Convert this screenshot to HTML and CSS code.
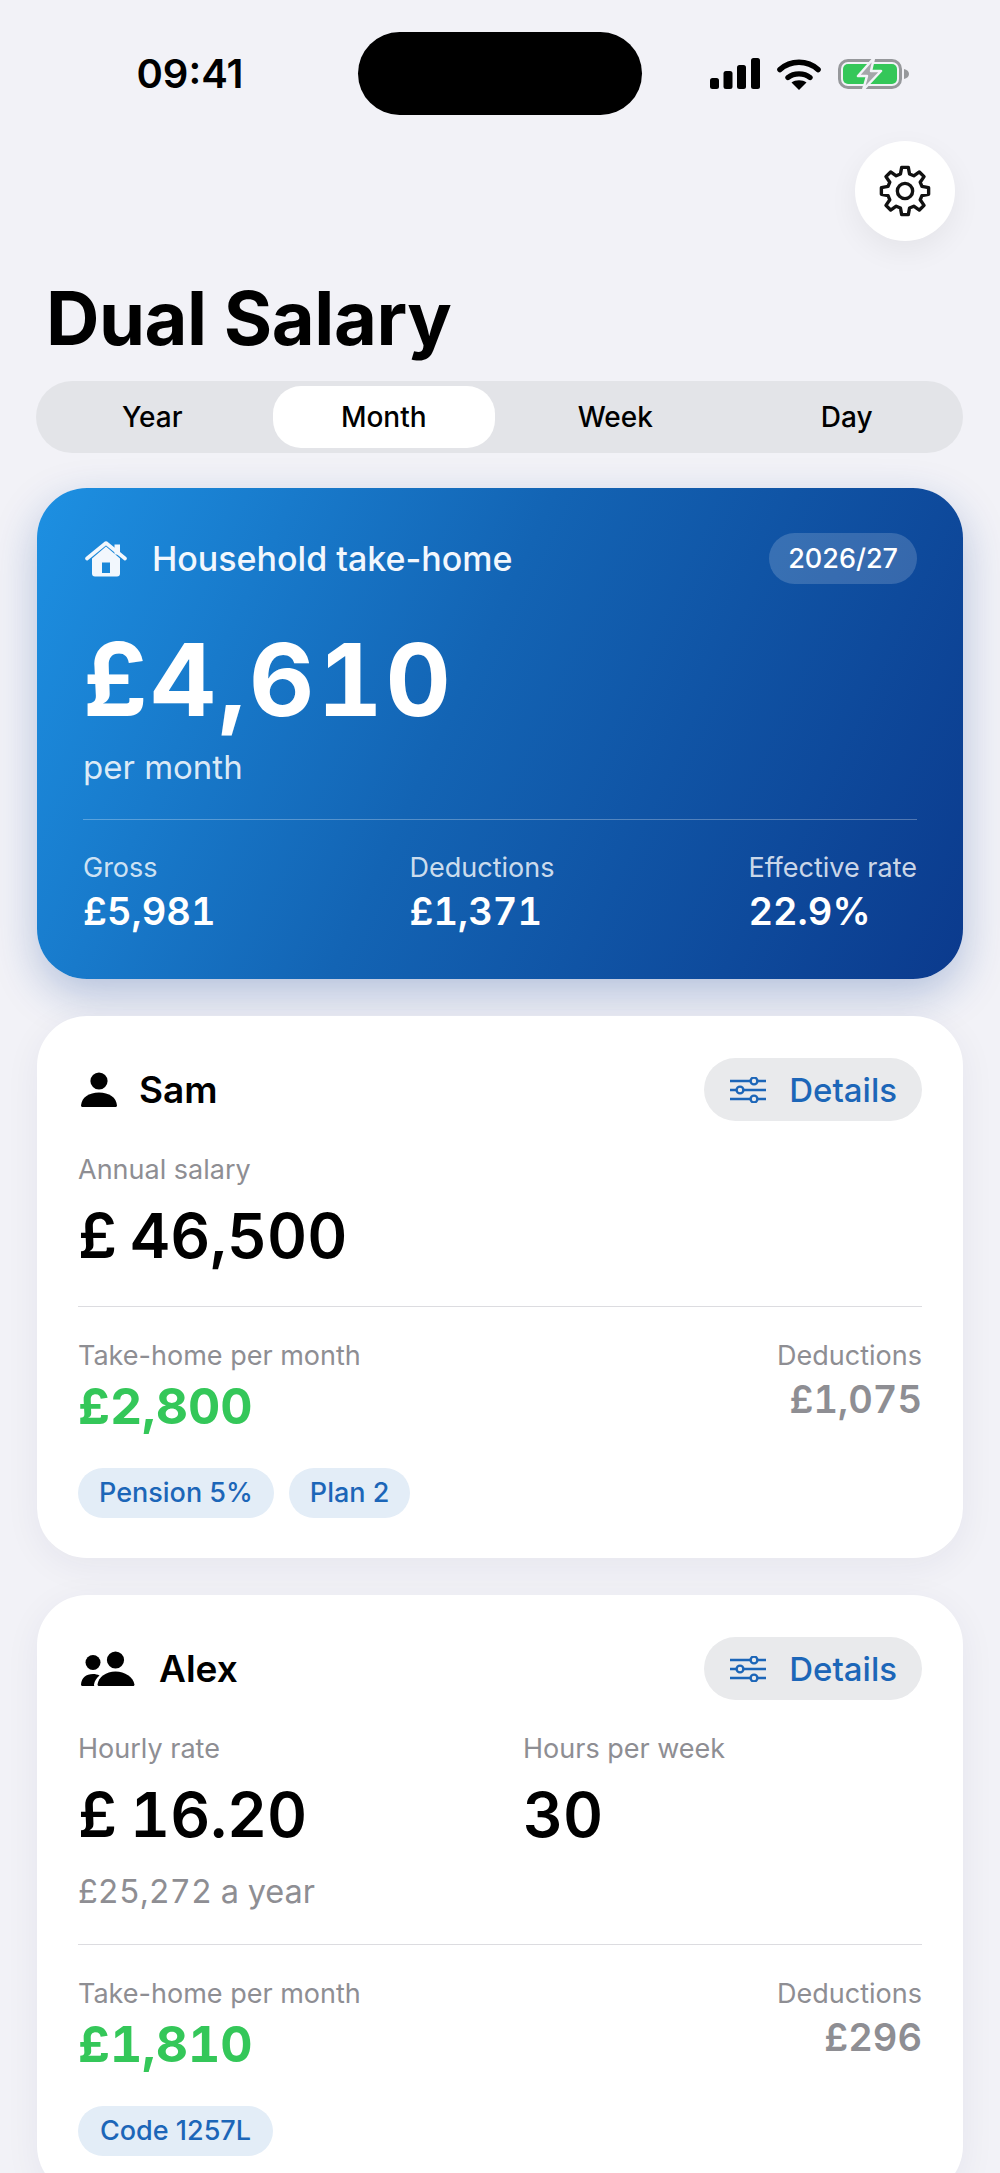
FILE: index.html
```html
<!DOCTYPE html>
<html lang="en">
<head>
    <meta charset="UTF-8">
    <meta name="viewport" content="width=device-width, initial-scale=1.0">
    <title>Dual Salary</title>
    <link rel="stylesheet" href="styles.css">
</head>
<body>
    <svg class="sprites" width="0" height="0" aria-hidden="true">
        <symbol id="icon-sliders" viewBox="0 0 36 26">
            <path d="M0 4h20M28 4h8M0 13h6M14 13h22M0 22h20M28 22h8" fill="none" stroke="currentColor" stroke-width="2.6" stroke-linecap="round"/>
            <circle cx="24" cy="4" r="3.4" fill="none" stroke="currentColor" stroke-width="2.4"/>
            <circle cx="10" cy="13" r="3.4" fill="none" stroke="currentColor" stroke-width="2.4"/>
            <circle cx="24" cy="22" r="3.4" fill="none" stroke="currentColor" stroke-width="2.4"/>
        </symbol>
    </svg>

    <div class="screen">
        <header class="status-bar">
            <span class="time">09:41</span>
            <span class="island"></span>
            <div class="status-icons">
                <svg class="signal" width="50" height="31" viewBox="0 0 50 31">
                    <rect x="0" y="20" width="9" height="11" rx="2.5"/>
                    <rect x="13.5" y="13" width="9" height="18" rx="2.5"/>
                    <rect x="27" y="7" width="9" height="24" rx="2.5"/>
                    <rect x="41" y="0" width="9" height="31" rx="2.5"/>
                </svg>
                <svg class="wifi" width="44" height="32" viewBox="0 0 44 32">
                    <path d="M3 11.5C13.5 1.8 30.5 1.8 41 11.5" fill="none" stroke="#000" stroke-width="5.6" stroke-linecap="round"/>
                    <path d="M11 19.5C16.8 14.6 27.2 14.6 33 19.5" fill="none" stroke="#000" stroke-width="5.4" stroke-linecap="round"/>
                    <path d="M22 32L14.5 24.5C18.5 21.4 25.5 21.4 29.5 24.5Z"/>
                </svg>
                <svg class="battery" width="71" height="32" viewBox="0 0 71 32">
                    <rect x="1.5" y="2.5" width="61" height="27" rx="8.5" fill="none" stroke="#96989b" stroke-width="3"/>
                    <rect x="5" y="6" width="54" height="20" rx="5" fill="#34c759"/>
                    <path d="M66 11c3 .6 5 2.4 5 5s-2 4.4-5 5z" fill="#96989b"/>
                    <path d="M36 0L20 18h9l-4 14 18-19h-10z" fill="#a4a6a9" stroke="#f2f2f7" stroke-width="2.5" stroke-linejoin="round"/>
                </svg>
            </div>
        </header>

        <div class="toolbar">
            <button class="settings-btn" aria-label="Settings">
                <svg width="54" height="54" viewBox="-12 -12 24 24">
                    <polygon points="-2.02,-7.53 -1.475,-10.5 1.475,-10.5 2.02,-7.53 3.9,-6.75 6.38,-8.47 8.47,-6.38 6.75,-3.9 7.53,-2.02 10.5,-1.475 10.5,1.475 7.53,2.02 6.75,3.9 8.47,6.38 6.38,8.47 3.9,6.75 2.02,7.53 1.475,10.5 -1.475,10.5 -2.02,7.53 -3.9,6.75 -6.38,8.47 -8.47,6.38 -6.75,3.9 -7.53,2.02 -10.5,1.475 -10.5,-1.475 -7.53,-2.02 -6.75,-3.9 -8.47,-6.38 -6.38,-8.47 -3.9,-6.75" fill="none" stroke="#111" stroke-width="1.5" stroke-linejoin="round"/>
                    <circle r="3.4" fill="none" stroke="#111" stroke-width="1.5"/>
                </svg>
            </button>
        </div>

        <h1 class="page-title">Dual Salary</h1>

        <nav class="period-tabs">
            <span class="tab">Year</span>
            <span class="tab active">Month</span>
            <span class="tab">Week</span>
            <span class="tab">Day</span>
        </nav>

        <section class="hero-card">
            <div class="hero-head">
                <div class="hero-title">
                    <svg width="42" height="36" viewBox="0 0 42 36">
                        <path d="M7 17.5L21 5.5L35 17.5V32.5A3 3 0 0 1 32 35.5H10A3 3 0 0 1 7 32.5ZM17 21.5V32H25V21.5Z" fill="#f2f7fd" fill-rule="evenodd"/>
                        <path d="M2 17.5L21 2L40 17.5" fill="none" stroke="#f2f7fd" stroke-width="3.6" stroke-linecap="round" stroke-linejoin="round"/>
                        <rect x="29.5" y="3.5" width="5.5" height="10" fill="#f2f7fd"/>
                    </svg>
                    <span>Household take-home</span>
                </div>
                <span class="tax-year">2026/27</span>
            </div>
            <div class="hero-amount">£4,610</div>
            <div class="hero-period">per month</div>
            <div class="hero-stats">
                <div>
                    <div class="stat-label">Gross</div>
                    <div class="stat-value">£5,981</div>
                </div>
                <div>
                    <div class="stat-label">Deductions</div>
                    <div class="stat-value">£1,371</div>
                </div>
                <div>
                    <div class="stat-label">Effective rate</div>
                    <div class="stat-value">22.9%</div>
                </div>
            </div>
        </section>

        <section class="person-card">
            <div class="person-head">
                <div class="person-name">
                    <svg width="36" height="36" viewBox="0 0 36 36">
                        <circle cx="18" cy="9" r="8.6"/>
                        <path d="M1.5 35C.6 35 0 34.4 0 33.500C.6 25.500 8 20.500 18 20.500S35.400 25.500 36 33.500C36 34.400 35.400 35 34.500 35Z"/>
                    </svg>
                    <span>Sam</span>
                </div>
                <button class="details-btn">
                    <svg width="36" height="26"><use href="#icon-sliders"/></svg>
                    <span>Details</span>
                </button>
            </div>
            <div class="inputs">
                <div>
                    <div class="field-label">Annual salary</div>
                    <div class="amount"><span>£</span><span>46,500</span></div>
                </div>
            </div>
            <div class="results">
                <div>
                    <div class="field-label">Take-home per month</div>
                    <div class="take-home">£2,800</div>
                </div>
                <div class="deductions">
                    <div class="field-label">Deductions</div>
                    <div class="deduction-value">£1,075</div>
                </div>
            </div>
            <div class="chips">
                <span class="chip">Pension 5%</span>
                <span class="chip">Plan 2</span>
            </div>
        </section>

        <section class="person-card">
            <div class="person-head">
                <div class="person-name wide">
                    <svg width="54" height="36" viewBox="0 0 54 36">
                        <circle cx="12" cy="11.500" r="7.500"/>
                        <circle cx="34.500" cy="9" r="8.600"/>
                        <path d="M1.500 35C.5 35 0 34.300 0 33.500C.5 27 5 23 12 23C14.500 23 16.500 23.500 18.500 24.500C15.500 27 13.500 30 13 33.500C13 34 13 34.500 13.300 35Z"/>
                        <path d="M18 35C17 35 16.500 34.300 16.500 33.500C17.500 26 25 20.500 34.500 20.500S52 26 53.500 33.500C53.500 34.300 53 35 52 35Z"/>
                    </svg>
                    <span>Alex</span>
                </div>
                <button class="details-btn">
                    <svg width="36" height="26"><use href="#icon-sliders"/></svg>
                    <span>Details</span>
                </button>
            </div>
            <div class="inputs two-col">
                <div>
                    <div class="field-label">Hourly rate</div>
                    <div class="amount"><span>£</span><span>16.20</span></div>
                </div>
                <div>
                    <div class="field-label">Hours per week</div>
                    <div class="amount"><span>30</span></div>
                </div>
            </div>
            <div class="annual-note">£25,272 a year</div>
            <div class="results">
                <div>
                    <div class="field-label">Take-home per month</div>
                    <div class="take-home">£1,810</div>
                </div>
                <div class="deductions">
                    <div class="field-label">Deductions</div>
                    <div class="deduction-value">£296</div>
                </div>
            </div>
            <div class="chips">
                <span class="chip">Code 1257L</span>
            </div>
        </section>
    </div>
</body>
</html>
```

FILE: styles.css
```css
* {
    margin: 0;
    padding: 0;
    box-sizing: border-box;
}

html, body {
    height: 100%;
    overflow: hidden;
}

body {
    font-family: Inter, "Liberation Sans", sans-serif;
    background: #f2f2f7;
    color: #000;
}

button {
    border: none;
    font-family: inherit;
}

.sprites {
    display: block;
}

.screen {
    height: 100vh;
    overflow: hidden;
}

/* Status bar */
.status-bar {
    display: grid;
    grid-template-columns: 358px 284px 1fr;
    align-items: center;
    padding-top: 32px;
}

.time {
    padding-left: 22px;
    text-align: center;
    font-size: 40px;
    font-weight: 600;
    line-height: 46px;
}

.island {
    height: 83px;
    background: #000;
    border-radius: 42px;
}

.status-icons {
    display: flex;
    align-items: center;
    gap: 17px;
    padding-left: 68px;
}

/* Settings */
.toolbar {
    display: flex;
    justify-content: flex-end;
    padding: 26px 45px 0 0;
}

.settings-btn {
    display: flex;
    align-items: center;
    justify-content: center;
    width: 100px;
    height: 100px;
    background: #fff;
    border-radius: 50%;
    box-shadow: 0 10px 30px rgba(0, 0, 0, 0.06);
}

.page-title {
    margin: 37px 0 0 46px;
    font-size: 74px;
    font-weight: 700;
    line-height: 80px;
    letter-spacing: -0.45px;
}

/* Period tabs */
.period-tabs {
    display: grid;
    grid-template-columns: repeat(4, 1fr);
    gap: 9px;
    height: 72px;
    margin: 23px 37px 0 36px;
    padding: 5px;
    background: #e3e4e8;
    border-radius: 36px;
}

.tab {
    display: flex;
    align-items: center;
    justify-content: center;
    font-size: 28px;
    font-weight: 500;
    border-radius: 28px;
}

.tab.active {
    background: #fff;
}

/* Household card */
.hero-card {
    height: 491px;
    margin: 35px 37px 0;
    padding: 45px 46px 0;
    color: #fff;
    background: linear-gradient(115deg, #1d90e2 0%, #1364b4 45%, #0b3a8d 100%);
    border-radius: 50px;
    box-shadow: 0 16px 44px rgba(20, 70, 150, 0.28);
}

.hero-head {
    display: flex;
    justify-content: space-between;
    align-items: center;
}

.hero-title {
    display: flex;
    align-items: center;
    gap: 25px;
    font-size: 34px;
    font-weight: 500;
    color: #f2f7fd;
}

.hero-title svg {
    margin-left: 2px;
}

.tax-year {
    padding: 0 19px;
    font-size: 27px;
    font-weight: 500;
    line-height: 51px;
    background: rgba(255, 255, 255, 0.17);
    border-radius: 26px;
}

.hero-amount {
    margin-top: 37px;
    font-size: 101px;
    font-weight: 700;
    font-variant-numeric: tabular-nums;
    letter-spacing: 3px;
    line-height: 116px;
}

.hero-period {
    margin-top: 10px;
    font-size: 33px;
    line-height: 40px;
    color: rgba(255, 255, 255, 0.85);
}

.hero-stats {
    display: flex;
    justify-content: space-between;
    margin-top: 32px;
    padding-top: 31px;
    border-top: 1px solid rgba(255, 255, 255, 0.28);
}

.stat-label {
    font-size: 27px;
    line-height: 34px;
    color: rgba(255, 255, 255, 0.8);
}

.stat-value {
    margin-top: 3px;
    font-size: 38px;
    font-weight: 600;
    font-variant-numeric: tabular-nums;
    line-height: 46px;
}

/* Person cards */
.person-card {
    margin: 37px 37px 0;
    padding: 42px 41px 40px;
    background: #fff;
    border-radius: 50px;
    box-shadow: 0 8px 36px rgba(30, 40, 80, 0.06);
}

.person-head {
    display: flex;
    justify-content: space-between;
    align-items: center;
}

.person-name {
    display: flex;
    align-items: center;
    gap: 22px;
    padding-left: 3px;
    font-size: 37px;
    font-weight: 600;
}

.person-name.wide {
    gap: 24px;
}

.details-btn {
    display: flex;
    align-items: center;
    gap: 23px;
    height: 63px;
    padding: 0 25px 0 26px;
    font-size: 33px;
    font-weight: 500;
    color: #1c66b8;
    background: #e9eaec;
    border-radius: 32px;
}

.inputs {
    margin-top: 32px;
    padding-bottom: 34px;
}

.inputs.two-col {
    display: grid;
    grid-template-columns: 445px 1fr;
    padding-bottom: 0;
}

.field-label {
    font-size: 27px;
    line-height: 34px;
    color: #8e8e93;
}

.amount {
    display: flex;
    gap: 13px;
    margin-top: 12px;
    font-size: 62px;
    font-weight: 600;
    font-variant-numeric: tabular-nums;
    line-height: 73px;
}

.annual-note {
    margin-top: 21px;
    padding-bottom: 32px;
    font-size: 32.5px;
    font-variant-numeric: tabular-nums;
    line-height: 40px;
    color: #8e8e93;
}

.results {
    display: flex;
    justify-content: space-between;
    padding-top: 32px;
    border-top: 1px solid #dcdce0;
}

.take-home {
    margin-top: 2px;
    font-size: 50px;
    font-weight: 700;
    font-variant-numeric: tabular-nums;
    line-height: 62px;
    color: #34c759;
}

.deductions {
    text-align: right;
}

.deduction-value {
    font-size: 38px;
    font-weight: 600;
    font-variant-numeric: tabular-nums;
    line-height: 52px;
    color: #8e8e93;
}

.chips {
    display: flex;
    gap: 15px;
    margin-top: 31px;
}

.chip {
    padding: 0 21px;
    font-size: 27px;
    font-weight: 500;
    line-height: 50px;
    color: #1c66b8;
    background: #e3edf7;
    border-radius: 25px;
}

.person-card:last-child .chip {
    min-width: 195px;
    text-align: center;
}
```
